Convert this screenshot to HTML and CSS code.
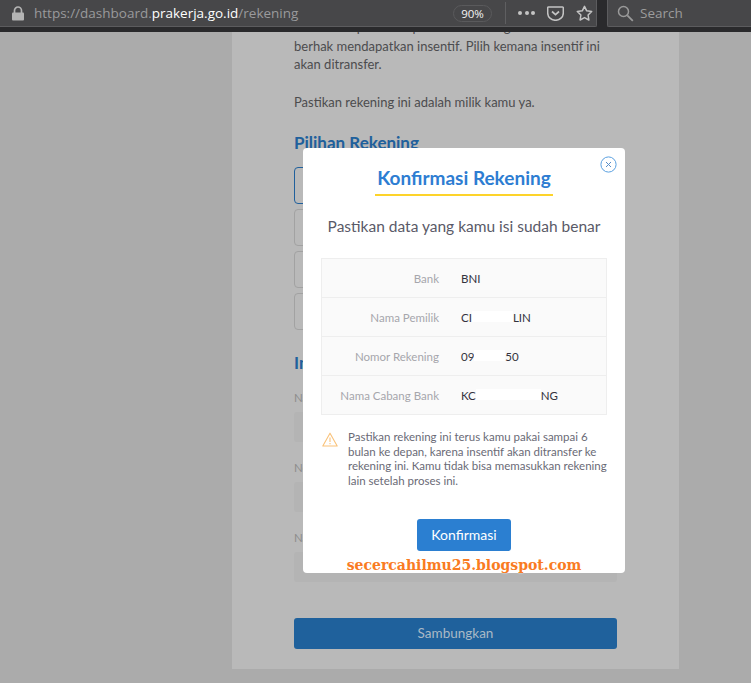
FILE: index.html
```html
<!DOCTYPE html>
<html lang="en">
<head>
    <meta charset="UTF-8">
    <meta name="viewport" content="width=device-width, initial-scale=1.0">
    <title>Rekening | Prakerja</title>
    <link rel="stylesheet" href="styles.css">
</head>
<body>
    <!-- Browser toolbar -->
    <div class="toolbar">
        <div class="url-bar">
            <svg class="lock" width="14" height="15" viewBox="0 0 14 15">
                <path d="M3.5 7V4.5a3.5 3.5 0 0 1 7 0V7" fill="none" stroke="#b4b4b4" stroke-width="1.7"/>
                <rect x="1" y="6.500" width="12" height="8" rx="1" fill="#b4b4b4"/>
            </svg>
            <div class="url">https://dashboard.<span class="url-host">prakerja.go.id</span>/rekening</div>
            <div class="zoom-level">90%</div>
            <div class="url-sep"></div>
            <div class="dots"><span></span><span></span><span></span></div>
            <svg class="pocket" width="17" height="15" viewBox="0 0 17 15">
                <path d="M1.500 1h14a.8.8 0 0 1 .8.8V7a7.800 7.300 0 0 1-15.600 0V1.800a.8.8 0 0 1 .8-.8z" fill="none" stroke="#c4c4c4" stroke-width="1.500"/>
                <path d="M5 5.500l3.500 3.200L12 5.500" fill="none" stroke="#c4c4c4" stroke-width="1.700"/>
            </svg>
            <svg class="star" width="17" height="16" viewBox="0 0 17 16">
                <path d="M8.500 1.300l2.200 4.500 5 .7-3.600 3.500.8 5-4.400-2.400-4.400 2.400.8-5L1.300 6.500l5-.7z" fill="none" stroke="#c4c4c4" stroke-width="1.500" stroke-linejoin="round"/>
            </svg>
        </div>
        <div class="search-bar">
            <svg width="17" height="17" viewBox="0 0 17 17">
                <circle cx="6.500" cy="6.500" r="5" fill="none" stroke="#9a9a9a" stroke-width="1.500"/>
                <path d="M10.300 10.300l5.500 5.500" stroke="#9a9a9a" stroke-width="1.800"/>
            </svg>
            <span>Search</span>
        </div>
    </div>

    <!-- Page behind the overlay -->
    <div class="viewport">
        <div class="page">
            <p class="intro">Selesaikan pelatihan pertama kamu agar kamu<br>berhak mendapatkan insentif. Pilih kemana insentif ini<br>akan ditransfer.</p>
            <p class="intro">Pastikan rekening ini adalah milik kamu ya.</p>
            <h2 class="section-title">Pilihan Rekening</h2>
            <div class="options">
                <div class="option option-active"></div>
                <div class="option"></div>
                <div class="option"></div>
                <div class="option"></div>
            </div>
            <h2 class="section-title section-info">Informasi Rekening</h2>
            <div class="field-label">Nama Bank</div>
            <div class="field-input"></div>
            <div class="field-label">Nomor Rekening</div>
            <div class="field-input"></div>
            <div class="field-label">Nama Pemilik</div>
            <div class="field-input"></div>
            <div class="connect-btn">Sambungkan</div>
        </div>

        <!-- Modal -->
        <div class="modal">
            <svg class="close-icon" width="17" height="17" viewBox="0 0 17 17">
                <circle cx="8.500" cy="8.500" r="7.600" fill="none" stroke="#5aa0e0" stroke-width="1"/>
                <path d="M6 6l5 5M11 6l-5 5" stroke="#5a8fc8" stroke-width="1"/>
            </svg>
            <div class="modal-title-wrap">
                <h1 class="modal-title">Konfirmasi Rekening</h1>
            </div>
            <p class="modal-subtitle">Pastikan data yang kamu isi sudah benar</p>

            <div class="data-table">
                <div class="data-row">
                    <div class="data-label">Bank</div>
                    <div class="data-value">BNI</div>
                </div>
                <div class="data-row">
                    <div class="data-label">Nama Pemilik</div>
                    <div class="data-value">CI<span class="redact redact-name"></span>LIN</div>
                </div>
                <div class="data-row">
                    <div class="data-label">Nomor Rekening</div>
                    <div class="data-value">09<span class="redact redact-number"></span>50</div>
                </div>
                <div class="data-row">
                    <div class="data-label">Nama Cabang Bank</div>
                    <div class="data-value">KC<span class="redact redact-branch"></span>NG</div>
                </div>
            </div>

            <div class="warning">
                <svg width="16" height="15" viewBox="0 0 16 15">
                    <path d="M8 1.200L15.200 14H.8z" fill="none" stroke="#f9c27a" stroke-width="1.100" stroke-linejoin="round"/>
                    <path d="M8 5.500v4.500M8 11v1.300" stroke="#f9c27a" stroke-width="1.100"/>
                </svg>
                <p>Pastikan rekening ini terus kamu pakai sampai 6<br>bulan ke depan, karena insentif akan ditransfer ke<br>rekening ini. Kamu tidak bisa memasukkan rekening<br>lain setelah proses ini.</p>
            </div>

            <div class="modal-actions">
                <div class="confirm-btn">Konfirmasi</div>
            </div>
            <div class="watermark">secercahilmu25.blogspot.com</div>
        </div>
    </div>
</body>
</html>
```
FILE: styles.css
```css
html, body {
    height: 100%;
}

body {
    margin: 0;
    height: 683px;
    overflow: hidden;
    background-color: #ababab;
    font-family: 'Lato', sans-serif;
    display: flex;
    flex-direction: column;
}

/* Toolbar */
.toolbar {
    height: 32px;
    flex-shrink: 0;
    box-sizing: border-box;
    padding-bottom: 5px;
    background-color: #2a2a2c;
    display: flex;
    gap: 10px;
    font-family: 'Open Sans', sans-serif;
}

.url-bar, .search-bar {
    box-sizing: border-box;
    background-color: #474749;
    border-bottom: 1px solid #5c5c5e;
    display: flex;
    align-items: center;
}

.url-bar {
    width: 597px;
    padding-left: 11px;
    border-right: 1px solid #5c5c5e;
    border-bottom-right-radius: 2px;
}

.search-bar {
    flex: 1;
    padding-left: 9px;
    border-left: 1px solid #5c5c5e;
    border-bottom-left-radius: 2px;
    color: #9c9c9c;
    font-size: 13.5px;
    gap: 6px;
}

.lock {
    margin-right: 9px;
}

.url {
    width: 420px;
    font-size: 13.5px;
    color: #9a9a9c;
    white-space: nowrap;
}

.url-host {
    color: #fff;
}

.zoom-level {
    width: 37px;
    height: 15px;
    line-height: 15px;
    margin-left: -1px;
    border: 1px solid #5a5a5c;
    border-radius: 9px;
    font-size: 11.500px;
    text-align: center;
    color: #f4f4f4;
}

.url-sep {
    width: 1px;
    height: 22px;
    margin-left: 13px;
    background-color: #5f5f61;
}

.dots {
    display: flex;
    gap: 2.500px;
    margin-left: 12px;
}

.dots span {
    width: 4px;
    height: 4px;
    border-radius: 50%;
    background-color: #c4c4c4;
}

.pocket {
    margin-left: 12px;
}

.star {
    margin-left: 12px;
}

/* Page */
.viewport {
    position: relative;
    flex: 1;
    overflow: hidden;
}

.page {
    box-sizing: border-box;
    width: 447px;
    height: 651px;
    margin-left: 232px;
    padding: 0 62px;
    background-color: #b9b9b9;
}

.intro {
    margin: -14px 0 19px;
    font-size: 13px;
    line-height: 18.500px;
    color: #4c4c4e;
}

.intro + .intro {
    margin: 0 0 21px;
}

.section-title {
    margin: 0 0 13px;
    font-size: 17px;
    line-height: 22px;
    font-weight: 700;
    color: #20609c;
}

.options {
    display: flex;
    flex-direction: column;
    gap: 5px;
}

.option {
    box-sizing: border-box;
    height: 37px;
    border: 1px solid #a2a2a2;
    border-radius: 4px;
}

.option-active {
    border-color: #20609c;
}

.section-info {
    margin: 22px 0 17px;
}

.field-label {
    font-size: 11.500px;
    line-height: 14px;
    color: #8c8c8c;
}

.field-input {
    height: 30px;
    margin: 7px 0 19px;
    border-radius: 3px;
    background-color: #b4b4b4;
}

.connect-btn {
    height: 31px;
    margin-top: 36px;
    border-radius: 3px;
    background-color: #1f619c;
    color: #a9b9c6;
    font-size: 13.500px;
    line-height: 31px;
    text-align: center;
}

/* Modal */
.modal {
    position: absolute;
    top: 116px;
    left: 303px;
    box-sizing: border-box;
    width: 322px;
    height: 425px;
    padding: 18px 18px 0;
    border-radius: 4px;
    background-color: #fff;
}

.close-icon {
    position: absolute;
    top: 8px;
    right: 8.500px;
}

.modal-title-wrap {
    display: flex;
    justify-content: center;
}

.modal-title {
    margin: 0;
    width: 178px;
    padding-bottom: 4px;
    border-bottom: 2px solid #fdd32a;
    font-size: 19px;
    line-height: 24px;
    font-weight: 700;
    text-align: center;
    color: #2d7dd2;
}

.modal-subtitle {
    margin: 19px 0 21px;
    font-size: 15.500px;
    line-height: 22px;
    text-align: center;
    color: #5a5a68;
}

.data-table {
    border: 1px solid #eeeeee;
    background-color: #fafafa;
}

.data-row {
    height: 38px;
    display: flex;
    align-items: center;
    gap: 22px;
    border-bottom: 1px solid #eeeeee;
    font-size: 11.500px;
}

.data-row:last-child {
    border-bottom: none;
}

.data-label {
    width: 117px;
    text-align: right;
    color: #a6a6ac;
}

.data-value {
    display: flex;
    color: #33333d;
}

.redact {
    height: 11px;
    background-color: #fff;
}

.redact-name {
    width: 41px;
}

.redact-number {
    width: 31px;
}

.redact-branch {
    width: 65px;
}

.warning {
    display: flex;
    gap: 10px;
    margin-top: 15px;
    padding-left: 1px;
}

.warning svg {
    margin-top: 2px;
    flex-shrink: 0;
}

.warning p {
    margin: 0;
    font-size: 11.500px;
    line-height: 14.500px;
    color: #6a6a76;
}

.modal-actions {
    display: flex;
    justify-content: center;
    margin-top: 31px;
}

.confirm-btn {
    width: 94px;
    height: 32px;
    border-radius: 3px;
    background-color: #2b7fd1;
    color: #fff;
    font-size: 14px;
    line-height: 32px;
    text-align: center;
}

.watermark {
    margin-top: 4px;
    font-family: 'DejaVu Serif', serif;
    font-size: 14px;
    font-weight: 700;
    line-height: 20px;
    text-align: center;
    color: #f97b22;
    text-shadow: 0 0 2px #fff;
}
```
